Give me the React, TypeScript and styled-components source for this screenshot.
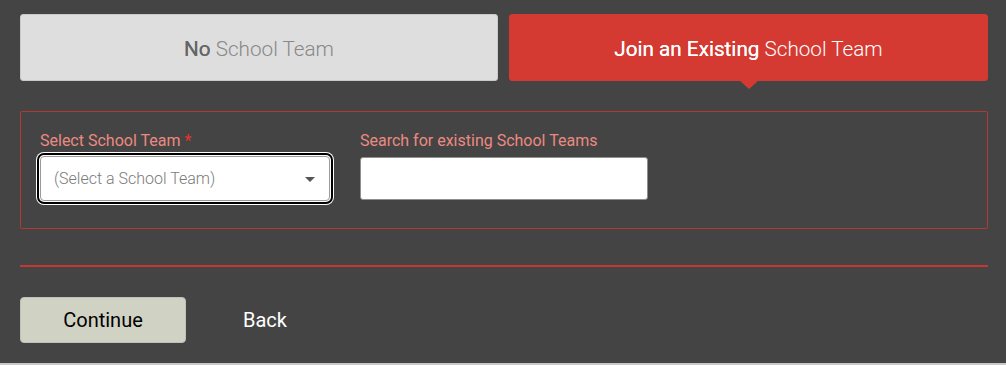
import React from "react";
import styled, { createGlobalStyle } from "styled-components";

const Global = createGlobalStyle`
  html, body { margin: 0; padding: 0; background: #c9c9c9; }
  body { font-family: Roboto, "Liberation Sans", Arial, sans-serif; }
  * { box-sizing: border-box; }
`;

const Page = styled.div`
  background: #444444;
  height: 363px;
  padding: 14px 18px 0 20px;
`;

const Tabs = styled.div`
  display: grid;
  grid-template-columns: 478px 479px;
  column-gap: 11px;
`;

const Tab = styled.div<{ $active?: boolean }>`
  position: relative;
  height: 67px;
  border-radius: 3px;
  display: flex;
  align-items: center;
  justify-content: center;
  font-size: 20.7px;
  padding-top: 2px;
  background: ${(p) => (p.$active ? "#d43a32" : "#dedede")};
  color: ${(p) => (p.$active ? "#ffffff" : "#888888")};
  border: 1px solid ${(p) => (p.$active ? "#d43a32" : "#c9c9c9")};
  ${(p) =>
    p.$active &&
    `&::after {
      content: "";
      position: absolute;
      left: 50%;
      bottom: -9px;
      margin-left: -10px;
      border-left: 10px solid transparent;
      border-right: 10px solid transparent;
      border-top: 9px solid #d43a32;
    }`}
`;

const Strong = styled.span<{ $active?: boolean }>`
  font-weight: 400;
  color: ${(p) => (p.$active ? "#ffffff" : "#666666")};
  margin-right: 5px;
  text-shadow: 0 0 0.4px currentColor;
`;

const Light = styled.span`
  font-weight: 300;
`;

const Panel = styled.div`
  margin-top: 30px;
  height: 118px;
  border: 1px solid #b03a34;
  border-radius: 2px;
  padding: 19px 0 0 19px;
  display: flex;
  gap: 30px;
`;

const Field = styled.div<{ $w: number }>`
  width: ${(p) => p.$w}px;
  display: flex;
  flex-direction: column;
`;

const Label = styled.div`
  font-size: 16px;
  line-height: 19px;
  color: #ec8a82;
  margin-bottom: 6px;
  white-space: nowrap;
`;

const Req = styled.span`
  color: #e8322b;
  margin-left: 4px;
`;

const SelectBox = styled.div`
  height: 45px;
  background: #ffffff;
  border: 1px solid #9a9a9a;
  border-radius: 4px;
  box-shadow: 0 0 0 1px #ffffff, 0 0 0 3px #000000, 0 0 0 4px #ffffff;
  display: flex;
  align-items: center;
  justify-content: space-between;
  padding: 0 14px 0 13px;
  font-size: 16px;
  font-weight: 300;
  color: #7a7a7a;
`;

const Caret = styled.span`
  width: 0;
  height: 0;
  border-left: 5.5px solid transparent;
  border-right: 5.5px solid transparent;
  border-top: 5px solid #555555;
  margin-top: 1px;
`;

const Input = styled.input`
  height: 43px;
  margin-top: 1px;
  background: #ffffff;
  border: 1px solid #8f8f8f;
  border-radius: 3px;
  outline: none;
`;

const Divider = styled.div`
  margin-top: 36px;
  height: 2px;
  background: #c8372f;
`;

const Footer = styled.div`
  margin-top: 30px;
  display: flex;
  align-items: center;
  gap: 57px;
`;

const Primary = styled.button`
  width: 166px;
  height: 46px;
  background: #d0d2c4;
  border: 1px solid #bfc1b4;
  border-radius: 4px;
  font-family: Roboto, "Liberation Sans", Arial, sans-serif;
  font-size: 20px;
  color: #000000;
  padding: 0;
`;

const LinkBtn = styled.button`
  background: none;
  border: none;
  padding: 0;
  font-family: Roboto, "Liberation Sans", Arial, sans-serif;
  font-size: 20px;
  color: #ffffff;
`;

export default function App() {
  return (
    <>
      <Global />
      <Page>
        <Tabs>
          <Tab>
            <Strong>No</Strong>
            <Light>School Team</Light>
          </Tab>
          <Tab $active>
            <Strong $active>Join an Existing</Strong>
            <Light>School Team</Light>
          </Tab>
        </Tabs>
        <Panel>
          <Field $w={290}>
            <Label>
              Select School Team<Req>*</Req>
            </Label>
            <SelectBox>
              <span>(Select a School Team)</span>
              <Caret />
            </SelectBox>
          </Field>
          <Field $w={288}>
            <Label>Search for existing School Teams</Label>
            <Input type="text" />
          </Field>
        </Panel>
        <Divider />
        <Footer>
          <Primary>Continue</Primary>
          <LinkBtn>Back</LinkBtn>
        </Footer>
      </Page>
    </>
  );
}
